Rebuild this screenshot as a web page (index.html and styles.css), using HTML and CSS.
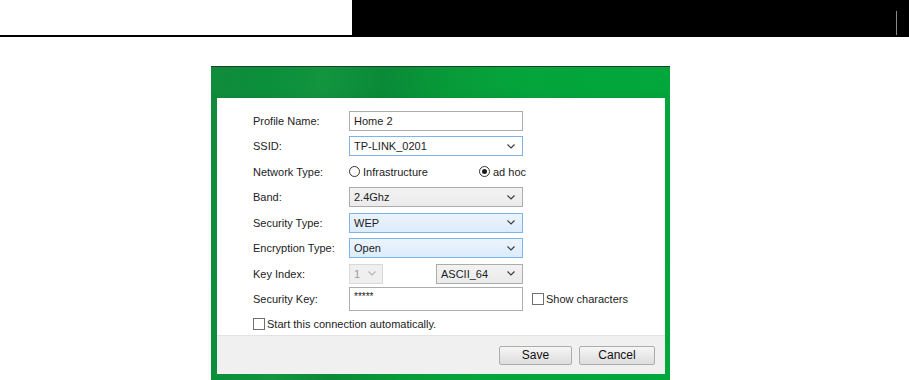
FILE: index.html
```html
<!DOCTYPE html>
<html lang="en">
<head>
<meta charset="utf-8">
<title>Profile</title>
<link rel="stylesheet" href="styles.css">
</head>
<body>
<header class="topbar">
  <div class="topbar-left"></div>
  <div class="topbar-right"><span class="topbar-tick"></span></div>
</header>
<main class="stage">
  <section class="dialog">
    <div class="panel">
      <div class="form">
        <div class="row">
          <span class="lbl">Profile Name:</span>
          <div class="field text">Home 2</div>
        </div>
        <div class="row">
          <span class="lbl">SSID:</span>
          <div class="field select focus"><span>TP-LINK_0201</span><svg class="chev" viewBox="0 0 8 5"><polyline points="0.5,0.5 4,4 7.5,0.5"/></svg></div>
        </div>
        <div class="row">
          <span class="lbl">Network Type:</span>
          <div class="radios">
            <span class="opt"><span class="radio"></span>Infrastructure</span>
            <span class="opt"><span class="radio on"></span>ad hoc</span>
          </div>
        </div>
        <div class="row">
          <span class="lbl">Band:</span>
          <div class="field select gray"><span>2.4Ghz</span><svg class="chev" viewBox="0 0 8 5"><polyline points="0.5,0.5 4,4 7.5,0.5"/></svg></div>
        </div>
        <div class="row">
          <span class="lbl">Security Type:</span>
          <div class="field select blue"><span>WEP</span><svg class="chev" viewBox="0 0 8 5"><polyline points="0.5,0.5 4,4 7.5,0.5"/></svg></div>
        </div>
        <div class="row">
          <span class="lbl">Encryption Type:</span>
          <div class="field select blue"><span>Open</span><svg class="chev" viewBox="0 0 8 5"><polyline points="0.5,0.5 4,4 7.5,0.5"/></svg></div>
        </div>
        <div class="row">
          <span class="lbl">Key Index:</span>
          <div class="keypair">
            <div class="field select disabled small"><span>1</span><svg class="chev" viewBox="0 0 8 5"><polyline points="0.5,0.5 4,4 7.5,0.5"/></svg></div>
            <div class="field select gray ascii"><span>ASCII_64</span><svg class="chev" viewBox="0 0 8 5"><polyline points="0.5,0.5 4,4 7.5,0.5"/></svg></div>
          </div>
        </div>
        <div class="row">
          <span class="lbl">Security Key:</span>
          <div class="field text tall"><span class="stars">*****</span></div>
          <span class="check-opt show"><span class="box"></span>Show characters</span>
        </div>
        <div class="row last">
          <span class="check-opt"><span class="box"></span>Start this connection automatically.</span>
        </div>
      </div>
      <div class="footer">
        <button class="btn save" type="button">Save</button>
        <button class="btn cancel" type="button">Cancel</button>
      </div>
    </div>
  </section>
</main>
</body>
</html>
```
FILE: styles.css
```css
* { box-sizing: border-box; }
html, body { margin: 0; padding: 0; background: #fff; }
body {
  font-family: "Liberation Sans", Arial, sans-serif;
  font-size: 11px;
  color: #1c1c1c;
  width: 909px;
  height: 380px;
  overflow: hidden;
}

.topbar {
  display: flex;
  height: 37px;
  border-bottom: 2px solid #000;
}
.topbar-left { width: 352px; background: #fff; }
.topbar-right {
  flex: 1;
  background: #000;
  display: flex;
  justify-content: flex-end;
  align-items: flex-end;
  padding-right: 12px;
}
.topbar-tick { width: 1px; height: 24px; background: #8a8a8a; }

.stage { padding: 29px 0 0 211px; }

.dialog {
  width: 459px;
  border-top: 1px solid #21402a;
  padding: 31px 5px 6px 6px;
  background:
    linear-gradient(180deg, rgba(255,255,255,0) 0%, rgba(255,255,255,0) 70%, rgba(0,0,0,0.04) 100%),
    linear-gradient(100deg, #108b3c 0%, #0b8f3a 12%, #13943f 22%, #0a8a37 34%, #079c39 48%, #04a53b 62%, #02a83b 100%);
  background-size: 100% 32px, 100% 100%;
  background-repeat: no-repeat;
}

.panel { background: #fff; }

.form { padding: 10px 0 0 36px; height: 237px; }

.row {
  display: flex;
  align-items: center;
  height: 25.5px;
}
.row.last { height: 23px; }

.lbl { width: 96px; flex: none; }

.field {
  width: 174px;
  height: 20px;
  border: 1px solid #abadb3;
  background: #fff;
  display: flex;
  align-items: center;
  justify-content: space-between;
  padding: 0 7px 0 4px;
  flex: none;
}
.field.text { padding-left: 4px; }
.field.tall { height: 24px; align-items: flex-start; padding-top: 3px; }
.stars { font-size: 10px; letter-spacing: 0; }

.field.select.focus { border-color: #7eb4ea; background: #fff; }
.field.select.gray {
  border-color: #acacac;
  background: linear-gradient(180deg, #f2f2f2 0%, #ebebeb 100%);
}
.field.select.blue {
  border-color: #7eb4ea;
  background: linear-gradient(180deg, #ecf4fc 0%, #dcecfc 100%);
}
.field.select.disabled {
  border-color: #d9d9d9;
  background: #efefef;
  color: #9a9a9a;
}
.field.small { width: 34px; padding: 0 6px 0 4px; }
.field.ascii { width: 87px; }

.chev { width: 8px; height: 5px; flex: none; }
.chev polyline { fill: none; stroke: #3c3c3c; stroke-width: 1.2; }
.disabled .chev polyline { stroke: #b5b5b5; }

.keypair {
  display: flex;
  justify-content: space-between;
  width: 174px;
}

.radios {
  width: 177px;
  display: flex;
  justify-content: space-between;
  align-items: center;
}
.opt { display: flex; align-items: center; gap: 3px; }
.radio {
  width: 11px;
  height: 11px;
  border-radius: 50%;
  border: 1px solid #333;
  background: #fff;
  position: relative;
  display: inline-block;
}
.radio.on::after {
  content: "";
  position: absolute;
  left: 2px; top: 2px;
  width: 5px; height: 5px;
  border-radius: 50%;
  background: #1a1a1a;
}

.check-opt { display: flex; align-items: center; gap: 2px; }
.check-opt.show { margin-left: 9px; }
.box {
  width: 12px;
  height: 12px;
  border: 1px solid #707070;
  background: #fff;
  display: inline-block;
}

.footer {
  height: 39px;
  background: #f0f0f0;
  border-top: 1px solid #e3e3e3;
  display: flex;
  justify-content: flex-end;
  align-items: center;
  gap: 7px;
  padding-right: 10px;
}
.btn {
  font-family: "Liberation Sans", Arial, sans-serif;
  font-size: 12px;
  color: #111;
  height: 19px;
  padding: 0;
  border: 1px solid #adadad;
  border-radius: 2px;
  background: linear-gradient(180deg, #f6f6f6 0%, #e9e9e9 50%, #dddddd 100%);
}
.btn.save { width: 73px; }
.btn.cancel { width: 76px; }
```
